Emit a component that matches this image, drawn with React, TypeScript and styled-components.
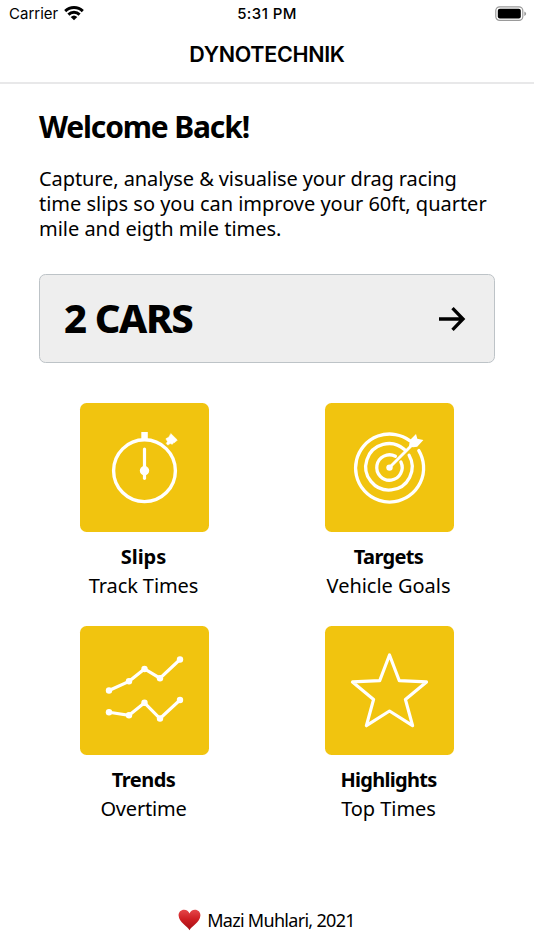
import React from "react";
import styled, { createGlobalStyle } from "styled-components";

const GlobalStyle = createGlobalStyle`
  *, *::before, *::after { box-sizing: border-box; }
  html, body { margin: 0; background: #fff; }
  body { overflow: hidden; }
`;

const Screen = styled.div`
  display: flex;
  flex-direction: column;
  width: 534px;
  height: 950px;
  background: #fff;
  color: #000;
  font-family: "Noto Sans", "Open Sans", sans-serif;
`;

const StatusBar = styled.div`
  display: grid;
  grid-template-columns: 1fr auto 1fr;
  align-items: center;
  height: 27px;
  padding: 0 7px 0 9px;
  font: 400 15px/27px Inter, sans-serif;
`;

const Carrier = styled.div`
  display: flex;
  align-items: center;
  gap: 6px;
`;

const Clock = styled.div`
  padding-right: 2px;
  font-weight: 500;
  letter-spacing: 0.42px;
`;

const Battery = styled.div`
  display: flex;
  justify-content: flex-end;
`;

const NavBar = styled.header`
  display: flex;
  align-items: center;
  justify-content: center;
  height: 57px;
  border-bottom: 2px solid #e8e8e9;
  font: 600 21.5px/55px Inter, sans-serif;
  letter-spacing: -0.3px;
`;

const Content = styled.main`
  flex: 1;
  padding: 22px 39px 0;
`;

const Heading = styled.h1`
  margin: 0;
  font-size: 30px;
  font-weight: 700;
  line-height: 42px;
  letter-spacing: -1.15px;
`;

const Intro = styled.p`
  margin: 19px 0 0;
  font-size: 20px;
  line-height: 24.8px;
`;

const Line = styled.span<{ $tracking: number }>`
  display: block;
  white-space: nowrap;
  letter-spacing: ${(p) => p.$tracking}px;
`;

const CarsButton = styled.button`
  display: flex;
  align-items: center;
  justify-content: space-between;
  width: 456px;
  height: 88.5px;
  margin: 33px 0 0;
  padding: 0 28px 0 24px;
  border: 1.3px solid #bdc3c7;
  border-radius: 6.5px;
  background: #eee;
  color: #000;
  font-family: inherit;
`;

const CarsCount = styled.span`
  padding-bottom: 2px;
  font-size: 40px;
  font-weight: 800;
  line-height: 84px;
  letter-spacing: -1.4px;
`;

const Menu = styled.div`
  display: grid;
  grid-template-columns: 245px 245px;
  row-gap: 24px;
  margin: 40px -17px 0;
`;

const MenuItem = styled.div`
  display: flex;
  flex-direction: column;
  align-items: center;
  height: 199px;
`;

const Tile = styled.div`
  width: 129px;
  height: 129px;
  margin-bottom: 10px;
  border-radius: 6.5px;
  background: #f1c40f;

  svg { display: block; }
`;

const Label = styled.div<{ $bold?: boolean; $tracking: number }>`
  height: 29px;
  padding-right: 2px;
  font-size: 20px;
  font-weight: ${(p) => (p.$bold ? 700 : 400)};
  line-height: 29px;
  letter-spacing: ${(p) => p.$tracking}px;
  white-space: nowrap;
`;

const Footer = styled.footer`
  display: flex;
  align-items: center;
  justify-content: center;
  gap: 6px;
  height: 58px;
  padding: 0 1px 2px 0;
  font-size: 18px;
  letter-spacing: -0.7px;
`;

const WifiIcon = () => (
  <svg width="20" height="15" viewBox="0 0 20 15">
    <g fill="none" stroke="#000" strokeWidth="2.9">
      <path d="M1.2 5.1a12.6 12.6 0 0 1 17.6 0" />
      <path d="M4.4 8.6a8 8 0 0 1 11.2 0" />
    </g>
    <path d="M6.7 11.1a4.8 4.8 0 0 1 6.6 0L10 14.3z" />
  </svg>
);

const BatteryIcon = () => (
  <svg width="32" height="16" viewBox="0 0 32 16">
    <rect x="0.8" y="0.8" width="27" height="13.6" rx="3.8" fill="none" stroke="#9a9a9a" strokeWidth="1.2" />
    <rect x="2.8" y="2.8" width="23" height="9.6" rx="2" />
    <path d="M29.3 5.4c2.4.9 2.4 3.6 0 4.5z" fill="#9a9a9a" />
  </svg>
);

const ArrowIcon = () => (
  <svg width="28" height="28" viewBox="0 0 28 28" fill="none" stroke="#000" strokeWidth="3.3">
    <path d="M1 14h24M14.5 3.2L25 14 14.5 24.8" />
  </svg>
);

const StopwatchIcon = () => (
  <svg width="129" height="129" viewBox="0 0 129 129" fill="none" stroke="#fff" strokeLinecap="round">
    <circle cx="64.5" cy="67.7" r="30.9" strokeWidth="3.4" />
    <path d="M64.5 46v29.3" strokeWidth="3.2" />
    <circle cx="64.5" cy="67.7" r="4.7" fill="#fff" stroke="none" />
    <path d="M61.3 29h6.5v8h-6.5z" fill="#fff" stroke="none" />
    <path d="M91 30.8l6.3 6.2-2.3 2.3-1.5.4-1.2 1.6-2.1-.8-2.4 1.6-1.5-1.6 1.2-2-1.6-2.7 2.8-1.6z" fill="#fff" stroke="#fff" strokeWidth="0.6" />
  </svg>
);

const TargetIcon = () => (
  <svg width="129" height="129" viewBox="0 0 129 129" fill="none" stroke="#fff" strokeWidth="3.3" strokeLinecap="round">
    <path d="M84.7 37.6A34 34 0 1 0 93.8 47.6" />
    <path d="M79.5 46.6A23.2 23.2 0 1 0 84.1 52.3" />
    <path d="M70.4 53.3A12.7 12.7 0 1 0 75.9 59" />
    <path d="M64.5 64.5L88 41" strokeWidth="2.9" />
    <circle cx="64.5" cy="64.6" r="3.2" fill="#fff" stroke="none" />
    <path d="M84 43.5l.8-6.2 6.2-6.4 1.3 4.9 6.1 1.3-6.2 6.6-4.1.5z" fill="#fff" stroke="none" />
  </svg>
);

const UPPER: [number, number][] = [[29, 64.5], [49, 55.3], [64.5, 43], [80, 52.2], [100, 33.5]];
const LOWER: [number, number][] = [[29, 86.3], [49, 89.3], [64.5, 76.8], [80, 92.5], [100, 74]];

const TrendsIcon = () => (
  <svg width="129" height="129" viewBox="0 0 129 129">
    {[UPPER, LOWER].map((points, i) => (
      <g key={i}>
        <polyline points={points.join(" ")} fill="none" stroke="#fff" strokeWidth="3.1" />
        {points.map(([x, y]) => (
          <circle key={x} cx={x} cy={y} r="3.2" fill="#fff" />
        ))}
      </g>
    ))}
  </svg>
);

const StarIcon = () => (
  <svg width="129" height="129" viewBox="0 0 129 129" fill="none" stroke="#fff" strokeWidth="3.2" strokeLinejoin="round">
    <path d="M64.5 29L74.3 54.7l27.2 1.2-21.1 17.5 7.2 26.3-23.1-14.7-23.1 14.7 7.2-26.3L27.5 55.9l27.2-1.2z" />
  </svg>
);

const HeartIcon = () => (
  <svg width="23" height="22" viewBox="0 0 23 22">
    <defs>
      <linearGradient id="heart" x1="0" y1="0" x2="0" y2="1">
        <stop offset="0" stopColor="#e5484a" />
        <stop offset="0.45" stopColor="#cf2024" />
        <stop offset="1" stopColor="#a50f14" />
      </linearGradient>
    </defs>
    <path
      d="M11.5 21.3C9.8 17.6 1 13.5.6 6.6.4 3 3 .7 6.1.7c2.6 0 4.5 1.5 5.4 3.8.9-2.3 2.8-3.8 5.4-3.8 3.1 0 5.7 2.3 5.5 5.9-.4 6.9-9.2 11-10.9 14.7z"
      fill="url(#heart)"
    />
  </svg>
);

const ITEMS = [
  { title: "Slips", titleTracking: -0.05, text: "Track Times", textTracking: -0.1, Icon: StopwatchIcon },
  { title: "Targets", titleTracking: -0.65, text: "Vehicle Goals", textTracking: -0.03, Icon: TargetIcon },
  { title: "Trends", titleTracking: -0.5, text: "Overtime", textTracking: -0.2, Icon: TrendsIcon },
  { title: "Highlights", titleTracking: -0.73, text: "Top Times", textTracking: -0.05, Icon: StarIcon },
];

export default function App() {
  return (
    <Screen>
      <GlobalStyle />
      <StatusBar>
        <Carrier>
          Carrier
          <WifiIcon />
        </Carrier>
        <Clock>5:31 PM</Clock>
        <Battery>
          <BatteryIcon />
        </Battery>
      </StatusBar>
      <NavBar>DYNOTECHNIK</NavBar>
      <Content>
        <Heading>Welcome Back!</Heading>
        <Intro>
          <Line $tracking={-0.09}>Capture, analyse &amp; visualise your drag racing</Line>
          <Line $tracking={-0.02}>time slips so you can improve your 60ft, quarter</Line>
          <Line $tracking={-0.02}>mile and eigth mile times.</Line>
        </Intro>
        <CarsButton>
          <CarsCount>2 CARS</CarsCount>
          <ArrowIcon />
        </CarsButton>
        <Menu>
          {ITEMS.map(({ title, titleTracking, text, textTracking, Icon }) => (
            <MenuItem key={title}>
              <Tile>
                <Icon />
              </Tile>
              <Label $bold $tracking={titleTracking}>{title}</Label>
              <Label $tracking={textTracking}>{text}</Label>
            </MenuItem>
          ))}
        </Menu>
      </Content>
      <Footer>
        <HeartIcon />
        Mazi Muhlari, 2021
      </Footer>
    </Screen>
  );
}
